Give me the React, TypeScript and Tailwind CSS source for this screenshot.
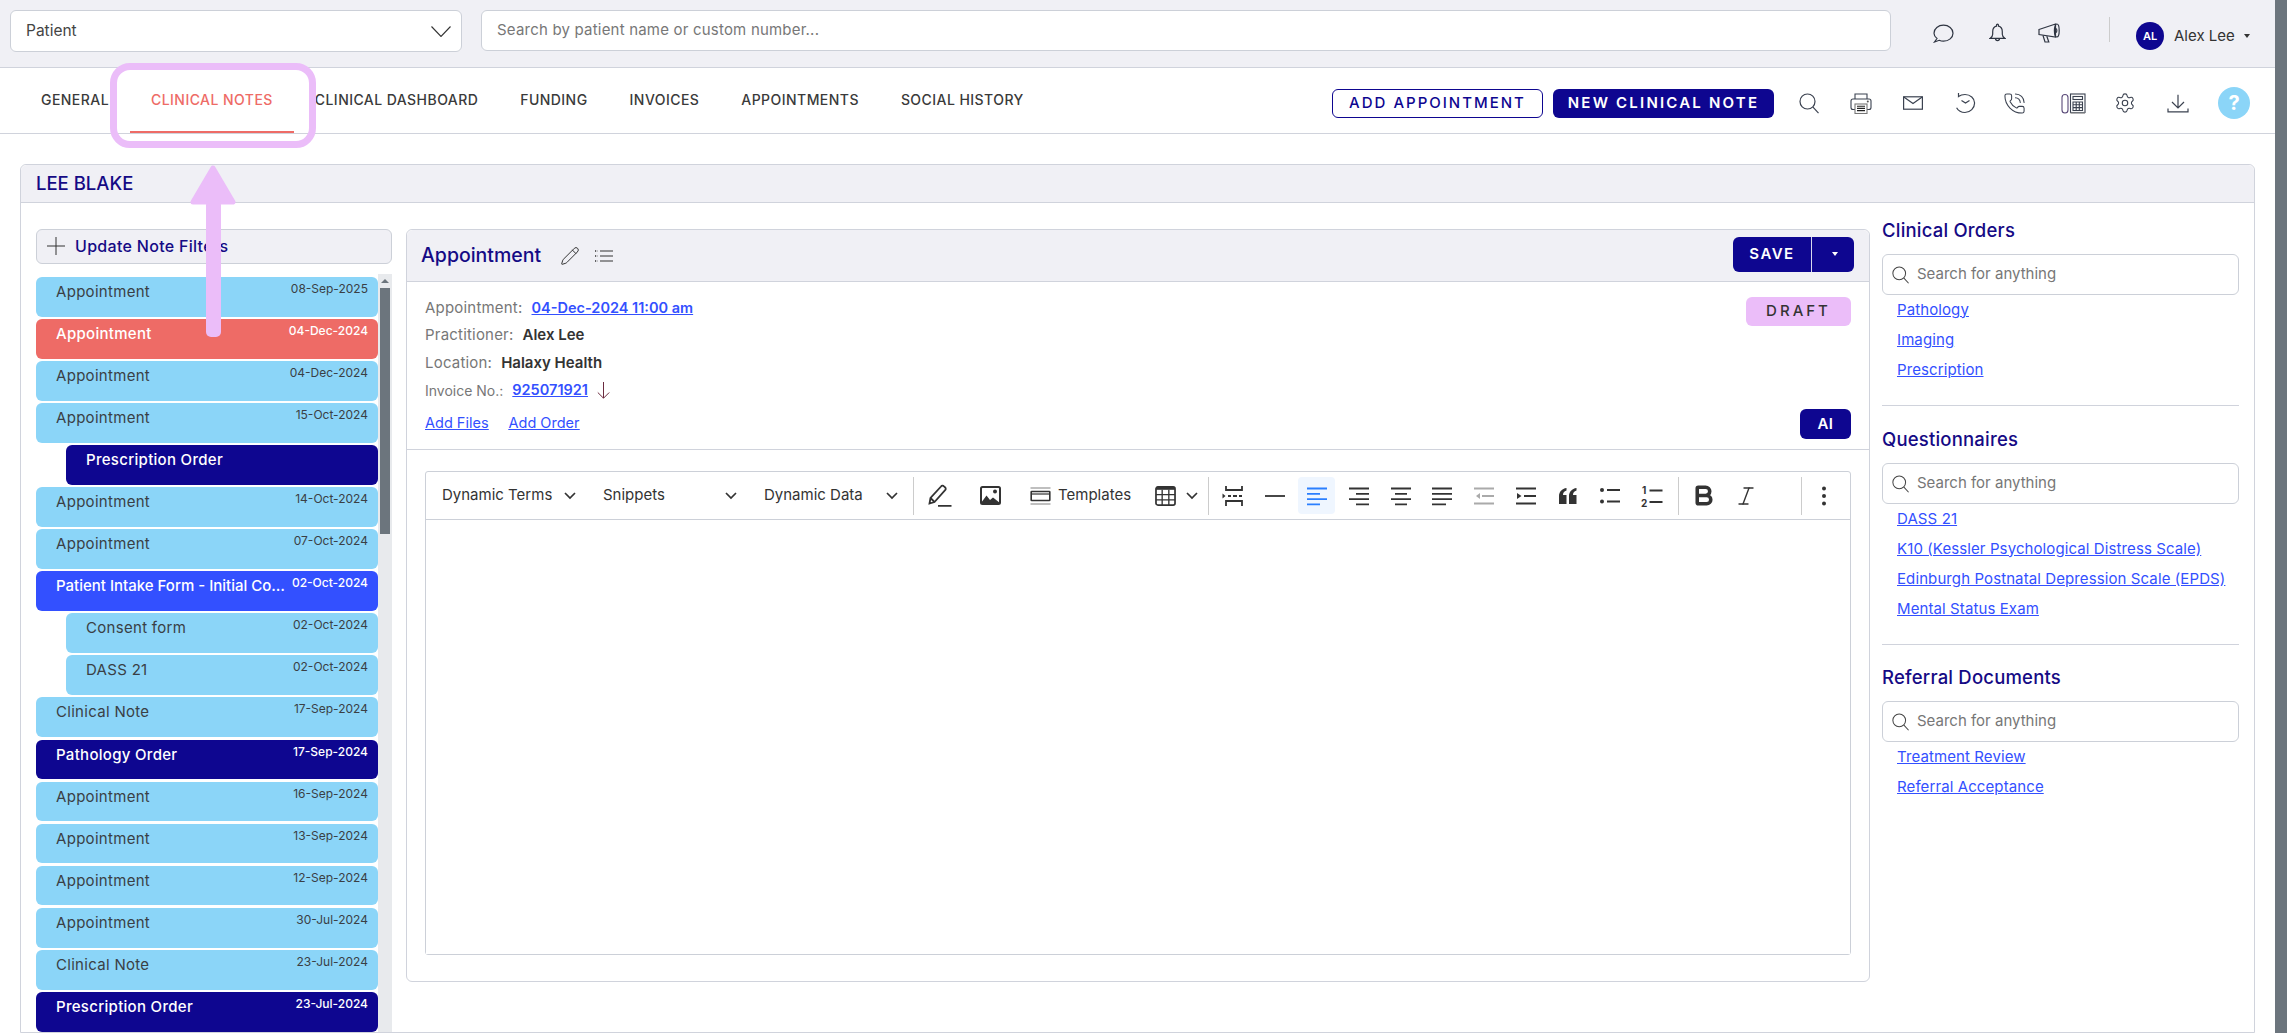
import { Bold, Italic, Pencil, PhoneCall, Settings } from "lucide-react";

const NAVY = "bg-[#0e0690]";

type Note = { title: string; date?: string; kind?: "red" | "navy" | "blue"; sub?: boolean };

const notes: Note[] = [
  { title: "Appointment", date: "08-Sep-2025" },
  { title: "Appointment", date: "04-Dec-2024", kind: "red" },
  { title: "Appointment", date: "04-Dec-2024" },
  { title: "Appointment", date: "15-Oct-2024" },
  { title: "Prescription Order", kind: "navy", sub: true },
  { title: "Appointment", date: "14-Oct-2024" },
  { title: "Appointment", date: "07-Oct-2024" },
  { title: "Patient Intake Form - Initial Consultation", date: "02-Oct-2024", kind: "blue" },
  { title: "Consent form", date: "02-Oct-2024", sub: true },
  { title: "DASS 21", date: "02-Oct-2024", sub: true },
  { title: "Clinical Note", date: "17-Sep-2024" },
  { title: "Pathology Order", date: "17-Sep-2024", kind: "navy" },
  { title: "Appointment", date: "16-Sep-2024" },
  { title: "Appointment", date: "13-Sep-2024" },
  { title: "Appointment", date: "12-Sep-2024" },
  { title: "Appointment", date: "30-Jul-2024" },
  { title: "Clinical Note", date: "23-Jul-2024" },
  { title: "Prescription Order", date: "23-Jul-2024", kind: "navy" },
];

const tabs = ["GENERAL", "CLINICAL NOTES", "CLINICAL DASHBOARD", "FUNDING", "INVOICES", "APPOINTMENTS", "SOCIAL HISTORY"];

const Chev = () => (
  <svg width="12" height="8" viewBox="0 0 12 8" fill="none" stroke="#333" strokeWidth="1.7">
    <path d="M1 1l5 5 5-5" />
  </svg>
);

const SearchIcon = ({ size = 20, color = "#3b4250" }: { size?: number; color?: string }) => (
  <svg width={size} height={size + 1} viewBox="0 0 20 21" fill="none" stroke={color} strokeWidth="1.2">
    <circle cx="8.5" cy="8.5" r="7.5" />
    <path d="M14 14.2l5.5 6" />
  </svg>
);

// top bar icons
const ChatIcon = () => (
  <svg width="21" height="19" viewBox="0 0 21 19" fill="none" stroke="#2f3542" strokeWidth="1.2">
    <path d="M4 14.5C2 13 1 11.3 1 9.2 1 4.8 5.3 1.2 10.5 1.2S20 4.8 20 9.2s-4.3 8-9.5 8c-1.6 0-3-.3-4.3-.9L1.5 18 4 14.5z" />
  </svg>
);
const BellIcon = () => (
  <svg width="17" height="20" viewBox="0 0 17 20" fill="none" stroke="#2f3542" strokeWidth="1.2">
    <path d="M8.5 1.2a1 1 0 0 1 1 1v1c2.5.6 3.8 2.9 3.8 5.5v2.5c0 1.8.8 3 2.7 4.2H1c1.9-1.2 2.7-2.4 2.7-4.2V8.7c0-2.6 1.3-4.9 3.8-5.5v-1a1 1 0 0 1 1-1z" />
    <path d="M6.5 15.6a2 2 0 0 0 4 0" />
  </svg>
);
const MegaphoneIcon = () => (
  <svg width="22" height="20" viewBox="0 0 22 20" fill="none" stroke="#2f3542" strokeWidth="1.2">
    <path d="M1 6.5 17.5 1v13L1 11.5z" />
    <ellipse cx="18.8" cy="7.5" rx="2.4" ry="6.5" />
    <path d="M17.8 5.5c1.4 0 1.4 4 0 4" />
    <path d="M5 12.5 7 19h3.8L8.8 13.2" />
  </svg>
);

// clinical notes action icons
const PrinterIcon = () => (
  <svg width="22" height="21" viewBox="0 0 22 21" fill="none" stroke="#3b4250" strokeWidth="1.1">
    <path d="M5 6V1h12v5" />
    <rect x="1" y="6" width="20" height="10.5" rx="2" />
    <rect x="5" y="11" width="12" height="9.5" fill="#fff" stroke="#777" />
    <path d="M7 13.2h8M7 15.4h8M7 17.6h8" stroke="#222" />
    <circle cx="17.8" cy="8.5" r="1" fill="#555" stroke="none" />
  </svg>
);
const MailIcon = () => (
  <svg width="20" height="14" viewBox="0 0 20 14" fill="none" stroke="#3b4250" strokeWidth="1.2">
    <rect x=".6" y=".8" width="18.8" height="12.4" />
    <path d="M.8 1l9.2 6.5L19.2 1" />
  </svg>
);
const ClockIcon = () => (
  <svg width="21" height="22" viewBox="0 0 21 22" fill="none" stroke="#3b4250" strokeWidth="1.2">
    <path d="M3.5 1v3.6c1.7-1.3 4-2.1 6.5-2.1 5.3 0 9.6 3.8 9.6 8.6s-4.3 9.4-9.6 9.4c-3.6 0-6.8-1.9-8.4-4.8" />
    <path d="M6.5 8.5 10.5 11l4-2.5" />
  </svg>
);
const CalcIcon = () => (
  <svg width="25" height="21" viewBox="0 0 25 21" fill="none" stroke="#3b4250" strokeWidth="1.1">
    <rect x="1" y="1.5" width="6" height="18.5" rx="3" stroke="#5a4a78" />
    <rect x="9.5" y="1" width="14.5" height="18.5" />
    <path d="M9.5 20.2h14.5" stroke="#aaa" strokeWidth="1.4" />
    <rect x="12" y="3.5" width="9.5" height="3" />
    <path d="M12 9h9.5v8.5H12zM12 11.8h9.5M12 14.6h9.5M15.2 9v8.5M18.3 9v8.5" />
  </svg>
);
const DownloadIcon = () => (
  <svg width="22" height="19" viewBox="0 0 22 19" fill="none" stroke="#3b4250" strokeWidth="1.2">
    <path d="M11 .8v13M5 8l6 6 6-6M1 14.5v3.3h20v-3.3" />
  </svg>
);
const ListIcon = () => (
  <svg width="18" height="14" viewBox="0 0 18 14" fill="none" stroke="#333" strokeWidth="1">
    <path d="M5 2h13M5 7h13M5 12h13" />
    <path d="M0 2h2.500M0 7h2.500M0 12h2.500" strokeWidth="1.6" strokeDasharray="1.2 1" />
  </svg>
);

// editor toolbar icons
const DrawIcon = () => (
  <svg width="24" height="23" viewBox="0 0 24 23" fill="none" stroke="#333" strokeWidth="1.8">
    <path d="M1.5 19.5 2.5 14 13 2.5a2 2 0 0 1 3-.2l1 .9a2 2 0 0 1 .1 3L6.5 18z" />
    <path d="M2.5 14l4 4M10 21.8h13.5" />
  </svg>
);
const ImageIcon = () => (
  <svg width="21" height="19" viewBox="0 0 21 19" fill="none">
    <rect x="1" y="1" width="19" height="17" rx="1.5" stroke="#333" strokeWidth="2" />
    <circle cx="15" cy="5.5" r="2" fill="#333" />
    <path d="M1 17l5.500-7.500L10 14l3-2.500L20 17v1H1z" fill="#333" />
  </svg>
);
const TemplatesIcon = () => (
  <svg width="21" height="18" viewBox="0 0 21 18" fill="none" stroke="#333" className="shrink-0">
    <path d="M.5 1h20M.5 17h20" stroke="#aaa" strokeWidth="1.6" />
    <rect x="1.2" y="4.5" width="18.6" height="9" rx=".5" strokeWidth="1.6" />
    <path d="M1 7h19" strokeWidth="1.2" />
  </svg>
);
const TableIcon = () => (
  <svg width="21" height="20" viewBox="0 0 22 21" fill="none" stroke="#333" strokeWidth="1.4">
    <rect x="1" y="1" width="20" height="19" rx="2" strokeWidth="1.8" />
    <path d="M1 2.5h20" strokeWidth="3" />
    <path d="M1 9h20M1 14.5h20M7.500 4v16M14.500 4v16" />
  </svg>
);
const Ic = ({ d, color = "#333", children }: { d?: string; color?: string; children?: React.ReactNode }) => (
  <svg width="24" height="24" viewBox="0 0 24 24" stroke={color} fill="none" strokeWidth="1.8">
    {d && <path d={d} />}
    {children}
  </svg>
);

const Cell = ({ children, active, w = "w-[41.9px]" }: { children: React.ReactNode; active?: boolean; w?: string }) => (
  <div className={`flex h-[37px] shrink-0 items-center justify-center ${w}`}>
    <div className={`flex h-full w-[37px] items-center justify-center rounded ${active ? "bg-[#eff6ff]" : ""}`}>{children}</div>
  </div>
);
const Sep = ({ className = "" }: { className?: string }) => <div className={`h-[38px] w-px shrink-0 bg-[#ccc] ${className}`} />;

const Dropdown = ({ label }: { label: string }) => (
  <div className="flex h-full w-[161px] shrink-0 items-center justify-between pl-[16px] pr-[11px] text-[15px] text-[#333]">
    <span>{label}</span>
    <Chev />
  </div>
);

const Toolbar = () => (
  <div className="flex h-[48px] shrink-0 items-center border-b border-[#ccd0d8]">
    <Dropdown label="Dynamic Terms" />
    <Dropdown label="Snippets" />
    <Dropdown label="Dynamic Data" />
    <Sep className="ml-[4px]" />
    <Cell w="w-[51px]"><DrawIcon /></Cell>
    <Cell w="w-[51px]"><ImageIcon /></Cell>
    <div className="ml-[14px] flex w-[101px] shrink-0 items-center gap-[7px] text-[15px] text-[#333]">
      <TemplatesIcon />
      <span>Templates</span>
    </div>
    <div className="ml-[24px] flex w-[43px] shrink-0 items-center justify-between">
      <TableIcon />
      <Chev />
    </div>
    <Sep className="ml-[10px]" />
    <div className="ml-[3px] flex items-center">
      <Cell><Ic d="M5 2v4h16V2M5 22v-5h16v5M7 12h3M12 12h4M18 12h3"><path d="M1.5 9.5l3 2.500-3 2.500z" fill="#333" stroke="none" /></Ic></Cell>
      <Cell><Ic d="M2 12h20" /></Cell>
      <Cell active><Ic color="#2b7fff" d="M2 4.5h20M2 9.8h13M2 15.1h20M2 20.4h13" /></Cell>
      <Cell><Ic d="M2 4.5h20M9 9.8h13M2 15.1h20M9 20.4h13" /></Cell>
      <Cell><Ic d="M2 4.5h20M6 9.8h12M2 15.1h20M6 20.4h12" /></Cell>
      <Cell><Ic d="M2 4.5h20M2 9.8h20M2 15.1h20M2 20.4h14" /></Cell>
      <Cell><Ic color="#aaa" d="M2 4.5h20M10 12h12M2 19.5h20"><path d="M8 9l-4 3 4 3z" fill="#aaa" stroke="none" /></Ic></Cell>
      <Cell><Ic d="M2 4.5h20M10 12h12M2 19.5h20"><path d="M3 9l4.500 3L3 15z" fill="#333" stroke="none" /></Ic></Cell>
      <Cell>
        <svg width="20" height="18" viewBox="0 0 20 18" fill="#333">
          <path d="M1 17V9C1 5 4 1.5 8.500 1v2.500C6 4 5 6 5 8h3.500v9zM11 17V9c0-4 3-7.500 7.500-8v2.500C16 4 15 6 15 8h3.500v9z" />
        </svg>
      </Cell>
      <Cell>
        <Ic d="M9 6h13M9 17.5h13">
          <circle cx="4" cy="6" r="2" fill="#333" stroke="none" />
          <circle cx="4" cy="17.5" r="2" fill="#333" stroke="none" />
        </Ic>
      </Cell>
      <Cell>
        <Ic d="M9.5 6.5h13M9.5 18h13">
          <text x="2" y="10" fontSize="10" fontWeight="700" fill="#333" stroke="none">1</text>
          <text x="1" y="23" fontSize="10" fontWeight="700" fill="#333" stroke="none">2</text>
        </Ic>
      </Cell>
    </div>
    <Sep className="ml-[5px]" />
    <div className="ml-[4px] flex items-center">
      <Cell w="w-[42px]"><Bold size={25} strokeWidth={3.4} color="#333" /></Cell>
      <Cell w="w-[42px]"><Italic size={24} strokeWidth={1.4} color="#333" /></Cell>
    </div>
    <Sep className="ml-[34px]" />
    <Cell w="w-[44px]">
      <svg width="6" height="20" viewBox="0 0 6 20" fill="#333">
        <circle cx="3" cy="2.5" r="2" />
        <circle cx="3" cy="10" r="2" />
        <circle cx="3" cy="17.5" r="2" />
      </svg>
    </Cell>
  </div>
);

const NoteRow = ({ note }: { note: Note }) => {
  const colors =
    note.kind === "red"
      ? "bg-[#ee6b66] text-white font-medium"
      : note.kind === "navy"
      ? `${NAVY} text-white font-medium`
      : note.kind === "blue"
      ? "bg-[#3350ff] text-white font-medium"
      : "bg-[#8bd5f8] text-[#3a3f45]";
  return (
    <div className={`flex h-[39.8px] shrink-0 items-start gap-[6px] rounded-[6px] pl-[20px] pr-[10px] pt-[4px] ${colors} ${note.sub ? "ml-[30px]" : ""}`}>
      <span className={`min-w-0 flex-1 truncate text-[15px] leading-[22px] ${note.kind === "blue" ? "tracking-normal" : "tracking-[0.3px]"}`}>{note.title}</span>
      {note.date && <span className="shrink-0 text-[12px] leading-[16px]">{note.date}</span>}
    </div>
  );
};

const SideSection = ({ title, links }: { title: string; links: string[] }) => (
  <div>
    <h3 className="flex h-[28px] items-center text-[18.5px] font-medium tracking-[0.2px] text-[#150a85]">{title}</h3>
    <div className="mt-[9px] flex h-[41px] items-center gap-[8px] rounded-[6px] border border-[#ccd0d8] bg-white pl-[9px]">
      <SearchIcon size={17} color="#444" />
      <span className="text-[15px] text-[#777]">Search for anything</span>
    </div>
    {links.map((l) => (
      <div key={l} className="flex h-[30px] items-center pl-[15px]">
        <a className="text-[15px] tracking-[0.1px] text-[#3350ff] underline">{l}</a>
      </div>
    ))}
  </div>
);

export default function App() {
  return (
    <div className="relative flex h-screen w-full overflow-hidden bg-white font-[Inter,sans-serif]">
      <div className="min-w-0 flex-1">
        {/* Top bar */}
        <header className="flex h-[68px] items-start border-b border-[#d0d3dc] bg-[#f0f0f5] pl-[10px] pt-[10px]">
          <div className="flex h-[42px] w-[452px] items-center justify-between rounded-[6px] border border-[#ccd0d8] bg-white pl-[15px] pr-[10px] text-[15.5px] text-[#444]">
            <span>Patient</span>
            <svg width="20" height="11" viewBox="0 0 20 11" fill="none" stroke="#333" strokeWidth="1.1">
              <path d="M.5.5l9.500 10 9.500-10" />
            </svg>
          </div>
          <div className="ml-[19px] flex h-[41px] w-[1410px] items-center rounded-[6px] border border-[#ccd0d8] bg-white pl-[15px] text-[15px] tracking-[0.2px] text-[#777]">
            Search by patient name or custom number...
          </div>
          <div className="ml-[42px] flex h-[46px] items-center gap-[34px]">
            <ChatIcon />
            <div className="ml-[1px]"><BellIcon /></div>
            <div className="-ml-[2px]"><MegaphoneIcon /></div>
          </div>
          <div className="ml-[49px] mt-[7px] h-[25px] w-px bg-[#ccc]" />
          <div className="ml-[26px] mt-[12px] flex items-center">
            <div className={`flex h-[28px] w-[28px] items-center justify-center rounded-full text-[11px] font-semibold text-white ${NAVY}`}>AL</div>
            <span className="ml-[10px] text-[15px] text-[#333]">Alex Lee</span>
            <span className="ml-[9px] h-0 w-0 border-x-[3.5px] border-t-[4px] border-x-transparent border-t-[#333]" />
          </div>
        </header>

        {/* Tabs */}
        <nav className="flex h-[66px] items-center border-b border-[#d0d3dc] pl-[20px] pr-[25px]">
          {tabs.map((t) => (
            <div
              key={t}
              className={`flex h-[64px] items-center border-b-2 px-[21px] text-[14px] font-medium tracking-[0.45px] ${
                t === "CLINICAL NOTES" ? "border-[#ee6b66] text-[#ee6b66]" : "border-transparent text-[#3a3a3a]"
              }`}
            >
              {t}
            </div>
          ))}
          <div className="ml-auto mt-[5px] flex items-center">
            <button className="h-[29px] w-[211px] rounded-[6px] border border-[#0e0690] bg-white text-[15px] font-medium tracking-[2px] text-[#0e0690]">
              ADD APPOINTMENT
            </button>
            <button className={`ml-[10px] h-[29px] w-[221px] rounded-[6px] text-[15px] font-semibold tracking-[2.2px] text-white ${NAVY}`}>
              NEW CLINICAL NOTE
            </button>
            <div className="ml-[25px] flex items-center gap-[31px]">
              <SearchIcon />
              <PrinterIcon />
              <MailIcon />
              <div className="ml-[1px]"><ClockIcon /></div>
              <div className="-ml-[4px]"><PhoneCall size={23} strokeWidth={1.1} color="#3b4250" /></div>
              <div className="ml-[4px]"><CalcIcon /></div>
              <div className="-ml-[3px]"><Settings size={22} strokeWidth={1.2} color="#3b4250" /></div>
              <DownloadIcon />
              <div className="-ml-[2px] flex h-[32px] w-[32px] items-center justify-center rounded-full bg-[#8bd5f8] text-[20px] font-bold text-white">?</div>
            </div>
          </div>
        </nav>

        {/* Patient panel */}
        <section className="ml-[20px] mr-[20px] mt-[30px] rounded-t-[6px] border border-[#d0d3dc]">
          <div className="flex h-[38px] items-center rounded-t-[6px] border-b border-[#d0d3dc] bg-[#f0f0f5] pl-[15px] text-[18.5px] font-medium text-[#150a85]">
            LEE BLAKE
          </div>
          <div className="flex px-[15px] pt-[14px]">
            {/* Notes column */}
            <aside className="mt-[12px] w-[356px] shrink-0">
              <div className="flex h-[35px] items-center gap-[10px] rounded-[6px] border border-[#ccd0d8] bg-[#f0f0f5] pb-[2px] pl-[10px] text-[16px] font-medium tracking-[0.3px] text-[#150a85]">
                <svg width="18" height="18" viewBox="0 0 18 18" stroke="#333" strokeWidth="1">
                  <path d="M9 0v18M0 9h18" />
                </svg>
                <span>Update Note Filters</span>
              </div>
              <div className="mt-[10px] flex">
                <div className="flex w-[342px] shrink-0 flex-col gap-[2.25px] pt-[3px]">
                  {notes.map((n, i) => (
                    <NoteRow key={i} note={n} />
                  ))}
                </div>
                <div className="flex w-[14px] shrink-0 flex-col items-center bg-[#e8eaed] pt-[5px]">
                  <span className="h-0 w-0 border-x-[4px] border-b-[4px] border-x-transparent border-b-[#6c757d]" />
                  <div className="mt-[5px] h-[246px] w-[10px] bg-[#6c757d]" />
                </div>
              </div>
            </aside>

            {/* Note editor card */}
            <main className="ml-[14px] mt-[12px] flex h-[753px] w-[1464px] shrink-0 flex-col rounded-[6px] border border-[#d0d3dc]">
              <div className="flex h-[52px] shrink-0 items-center rounded-t-[6px] border-b border-[#d0d3dc] bg-[#f0f0f5] pl-[14px] pr-[15px]">
                <span className="text-[19.5px] font-medium text-[#150a85]">Appointment</span>
                <Pencil size={20} strokeWidth={1.2} color="#333" className="ml-[19px]" />
                <div className="ml-[15px]"><ListIcon /></div>
                <div className={`-mt-[3px] ml-auto flex h-[35px] w-[121px] items-center rounded-[6px] text-white ${NAVY}`}>
                  <span className="w-[78px] text-center text-[15px] font-semibold tracking-[1.5px]">SAVE</span>
                  <span className="h-full w-px bg-[#d8d8ee]" />
                  <span className="ml-[20px] h-0 w-0 border-x-[3.5px] border-t-[4px] border-x-transparent border-t-white" />
                </div>
              </div>

              <div className="flex h-[168px] shrink-0 justify-between border-b border-[#d0d3dc] pl-[18px] pr-[18px]">
                <div className="pt-[12px] text-[15px] tracking-[0.2px] text-[#777]">
                  <div className="flex h-[27.5px] items-center gap-[9px]">
                    Appointment:
                    <a className="text-[14.5px] font-semibold tracking-normal text-[#3350ff] underline">04-Dec-2024 11:00 am</a>
                  </div>
                  <div className="flex h-[27.5px] items-center gap-[9px]">
                    Practitioner:
                    <span className="font-semibold tracking-normal text-[#333]">Alex Lee</span>
                  </div>
                  <div className="flex h-[27.5px] items-center gap-[9px]">
                    Location:
                    <span className="font-semibold tracking-normal text-[#333]">Halaxy Health</span>
                  </div>
                  <div className="flex h-[27.5px] items-center gap-[9px]">
                    <span className="text-[14px] tracking-normal">Invoice No.:</span>
                    <a className="text-[14.5px] font-semibold tracking-normal text-[#3350ff] underline">925071921</a>
                    <svg width="13" height="17" viewBox="0 0 13 17" fill="none" stroke="#6b2b3f" strokeWidth="1">
                      <path d="M6.5 0v16M.8 10.500l5.700 5.700 5.700-5.700" />
                    </svg>
                  </div>
                  <div className="mt-[5px] flex h-[28px] items-center gap-[20px] text-[14.5px] tracking-normal text-[#3350ff] underline">
                    <a>Add Files</a>
                    <a>Add Order</a>
                  </div>
                </div>
                <div className="flex flex-col items-end justify-between pb-[10px] pt-[15px]">
                  <div className="flex h-[29px] w-[105px] items-center justify-center rounded-[6px] bg-[#ebbdf9] text-[15px] font-medium tracking-[3px] text-[#333]">
                    DRAFT
                  </div>
                  <div className={`flex h-[30px] w-[51px] items-center justify-center rounded-[6px] text-[15px] font-semibold tracking-[0.5px] text-white ${NAVY}`}>
                    AI
                  </div>
                </div>
              </div>

              <div className="mb-[26px] ml-[18px] mr-[18px] mt-[21px] flex flex-1 flex-col rounded-[3px] border border-[#ccd0d8]">
                <Toolbar />
                <div className="flex-1 bg-white" />
              </div>
            </main>

            {/* Right column */}
            <aside className="ml-[12px] w-[357px] shrink-0">
              <SideSection title="Clinical Orders" links={["Pathology", "Imaging", "Prescription"]} />
              <hr className="mb-[20px] mt-[20px] border-[#d0d3dc]" />
              <SideSection
                title="Questionnaires"
                links={["DASS 21", "K10 (Kessler Psychological Distress Scale)", "Edinburgh Postnatal Depression Scale (EPDS)", "Mental Status Exam"]}
              />
              <hr className="mb-[19px] mt-[20px] border-[#d0d3dc]" />
              <SideSection title="Referral Documents" links={["Treatment Review", "Referral Acceptance"]} />
            </aside>
          </div>
        </section>
      </div>

      {/* Page scrollbar */}
      <div className="w-[12px] shrink-0 bg-[#6c757d]" />

      {/* Callout drawn over the tab */}
      <div className="pointer-events-none absolute left-[110px] top-[63px] h-[85px] w-[206px] rounded-[20px] border-[7px] border-[#ebbdf9]" />
      <svg className="pointer-events-none absolute left-[188px] top-[162px]" width="50" height="178" viewBox="0 0 50 178" fill="#ebbdf9">
        <path d="M25 6 L45 40 H5 Z" stroke="#ebbdf9" strokeWidth="5" strokeLinejoin="round" />
        <rect x="18" y="38" width="15" height="137" rx="5" />
      </svg>
    </div>
  );
}
